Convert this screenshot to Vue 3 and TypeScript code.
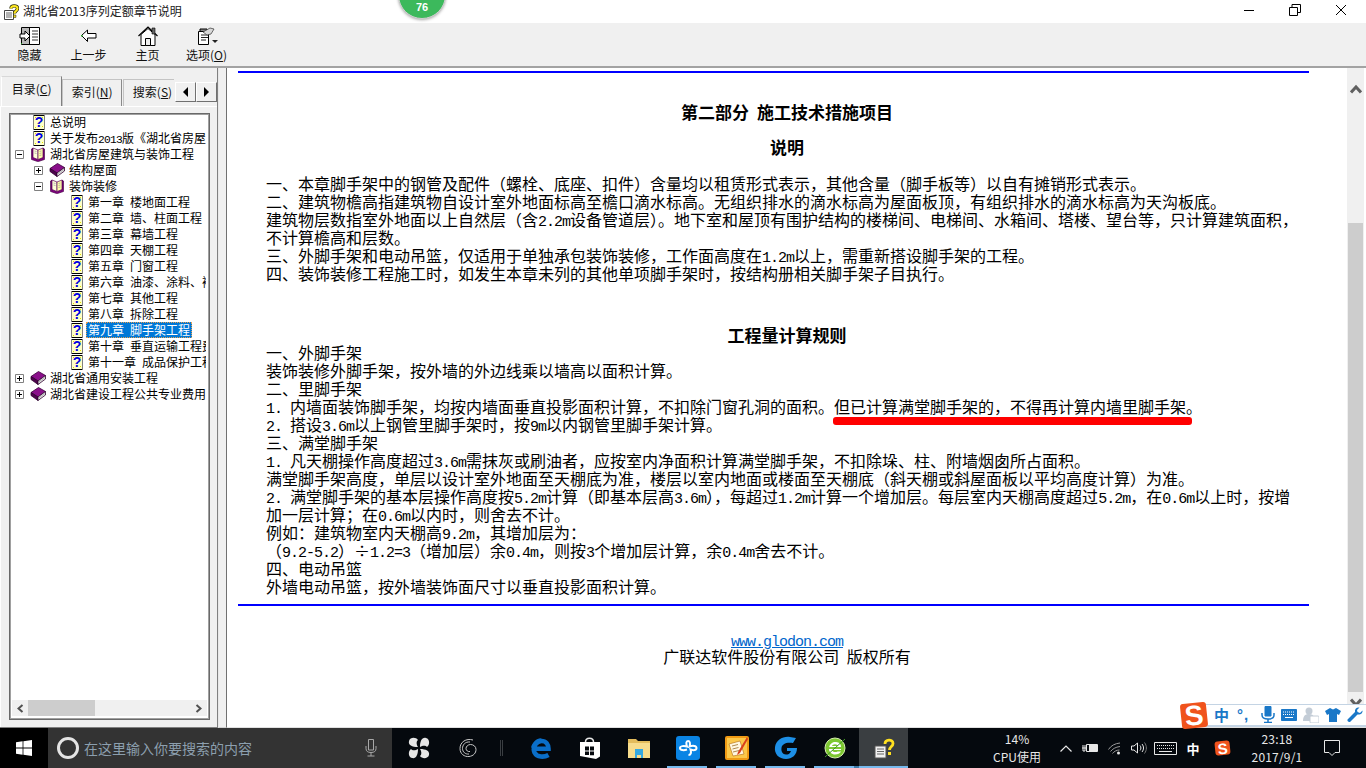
<script setup lang="ts">
type Seg = { t: string; lat: boolean }
type Row = { label: string; level: number; icon: 'help' | 'open' | 'closed'; exp?: '+' | '-'; selected?: boolean }

function seg(text: string): Seg[] {
  return (text.match(/[\x20-\x7e]+|[^\x20-\x7e]+/g) ?? []).map((t) => ({ t, lat: /^[\x20-\x7e]/.test(t) }))
}

const rows: Row[] = [
  { label: '总说明', level: 0, icon: 'help' },
  { label: '关于发布2013版《湖北省房屋建筑与装饰工程', level: 0, icon: 'help' },
  { label: '湖北省房屋建筑与装饰工程', level: 0, icon: 'open', exp: '-' },
  { label: '结构屋面', level: 1, icon: 'closed', exp: '+' },
  { label: '装饰装修', level: 1, icon: 'open', exp: '-' },
  { label: '第一章 楼地面工程', level: 2, icon: 'help' },
  { label: '第二章 墙、柱面工程', level: 2, icon: 'help' },
  { label: '第三章 幕墙工程', level: 2, icon: 'help' },
  { label: '第四章 天棚工程', level: 2, icon: 'help' },
  { label: '第五章 门窗工程', level: 2, icon: 'help' },
  { label: '第六章 油漆、涂料、裱糊工程', level: 2, icon: 'help' },
  { label: '第七章 其他工程', level: 2, icon: 'help' },
  { label: '第八章 拆除工程', level: 2, icon: 'help' },
  { label: '第九章 脚手架工程', level: 2, icon: 'help', selected: true },
  { label: '第十章 垂直运输工程费用', level: 2, icon: 'help' },
  { label: '第十一章 成品保护工程', level: 2, icon: 'help' },
  { label: '湖北省通用安装工程', level: 0, icon: 'closed', exp: '+' },
  { label: '湖北省建设工程公共专业费用', level: 0, icon: 'closed', exp: '+' },
]

const notes = [
  '一、本章脚手架中的钢管及配件（螺栓、底座、扣件）含量均以租赁形式表示，其他含量（脚手板等）以自有摊销形式表示。',
  '二、建筑物檐高指建筑物自设计室外地面标高至檐口滴水标高。无组织排水的滴水标高为屋面板顶，有组织排水的滴水标高为天沟板底。',
  '建筑物层数指室外地面以上自然层（含2.2m设备管道层）。地下室和屋顶有围护结构的楼梯间、电梯间、水箱间、塔楼、望台等，只计算建筑面积，',
  '不计算檐高和层数。',
  '三、外脚手架和电动吊篮，仅适用于单独承包装饰装修，工作面高度在1.2m以上，需重新搭设脚手架的工程。',
  '四、装饰装修工程施工时，如发生本章未列的其他单项脚手架时，按结构册相关脚手架子目执行。',
]
const rulesA = ['一、外脚手架', '装饰装修外脚手架，按外墙的外边线乘以墙高以面积计算。', '二、里脚手架']
const markedBefore = '1. 内墙面装饰脚手架，均按内墙面垂直投影面积计算，不扣除门窗孔洞的面积。'
const marked = '但已计算满堂脚手架的，不得再计算内墙里脚手架。'
const rulesB = [
  '2. 搭设3.6m以上钢管里脚手架时，按9m以内钢管里脚手架计算。',
  '三、满堂脚手架',
  '1. 凡天棚操作高度超过3.6m需抹灰或刷油者，应按室内净面积计算满堂脚手架，不扣除垛、柱、附墙烟囱所占面积。',
  '满堂脚手架高度，单层以设计室外地面至天棚底为准，楼层以室内地面或楼面至天棚底（斜天棚或斜屋面板以平均高度计算）为准。',
  '2. 满堂脚手架的基本层操作高度按5.2m计算（即基本层高3.6m），每超过1.2m计算一个增加层。每层室内天棚高度超过5.2m，在0.6m以上时，按增',
  '加一层计算；在0.6m以内时，则舍去不计。',
  '例如：建筑物室内天棚高9.2m，其增加层为：',
  '（9.2-5.2）÷1.2=3（增加层）余0.4m，则按3个增加层计算，余0.4m舍去不计。',
  '四、电动吊篮',
  '外墙电动吊篮，按外墙装饰面尺寸以垂直投影面积计算。',
]
</script>

<template>
  <div class="screen">
    <svg class="defs" width="0" height="0">
      <symbol id="i-help" viewBox="0 0 16 16">
        <path d="M3.5 1.5h11v14h-11z" fill="#ffffc8" stroke="#000" />
        <path d="M3 1h1v15H3zM14 1h1v15h-1z" fill="#808080" />
        <path d="M5 3h1v1H5zM7 9h1v1H7zM12 3h1v1h-1zM12 12h1v1h-1zM5 13h1v1H5z" fill="#e0e000" />
        <text x="9" y="13" text-anchor="middle" class="qmark">?</text>
      </symbol>
      <symbol id="i-closed" viewBox="0 0 16 16">
        <path d="M1 6.5 8.5 1.5 15.5 5.5 8 11z" fill="#8a0f8a" stroke="#3c003c" stroke-width=".8" />
        <path d="M1 6.5v3L8 14.5V11z" fill="#4e024e" stroke="#2d002d" stroke-width=".8" />
        <path d="M8 11v3.5l7.5-5.5V5.500z" fill="#e6e6e6" stroke="#2d002d" stroke-width=".8" />
        <path d="M8 12.500 15 7.500" stroke="#a0a0a0" stroke-width=".7" />
      </symbol>
      <symbol id="i-open" viewBox="0 0 16 16">
        <path d="M1.500 3v10.500L7.500 15.500h1l6-2V3L13 2v9.500l-4.500 2H7.500L3 11.500V2z" fill="#800080" stroke="#3c003c" stroke-width=".6" />
        <path d="M3 2 8 4v9.500L3 11.500z" fill="#ffffd8" stroke="#5a005a" stroke-width=".7" />
        <path d="M13 2 8 4v9.500l5-2z" fill="#ffffa8" stroke="#5a005a" stroke-width=".7" />
        <path d="M9.500 5.500 11.500 5M9.500 7.500l2-.5M9.500 9.500l2-.5M4.500 5l2 .5M4.500 7l2 .5" stroke="#9a9a9a" stroke-width=".7" />
      </symbol>
    </svg>

    <header class="titlebar">
      <svg class="title-icon" width="17" height="19" viewBox="0 0 17 19">
        <path d="M2.500 8.500h9v9h-9z" fill="#fff" stroke="#444" />
        <path d="M4 11h6M4 13h6M4 15h6" stroke="#666" />
        <path d="M9 6.500C9 3 15.500 3 15.500 6.500 15.500 9 12.500 9 12.500 11.500" fill="none" stroke="#2b2b00" stroke-width="3.400" />
        <path d="M9 6.500C9 3 15.500 3 15.500 6.500 15.500 9 12.500 9 12.500 11.500" fill="none" stroke="#ffe820" stroke-width="2" />
        <path d="M11.500 13h2.400v2.400h-2.400z" fill="#ffe820" stroke="#2b2b00" stroke-width=".6" />
      </svg>
      <span class="title-text">湖北省2013序列定额章节说明</span>
      <div class="win-buttons">
        <button class="win-btn"><svg width="12" height="12"><path d="M1 6.500h10" stroke="#000" /></svg></button>
        <button class="win-btn"><svg width="12" height="12"><path d="M.5 3.500h8v8h-8zM3 3.500V.5h8.500v8H8.500" fill="none" stroke="#000" /></svg></button>
        <button class="win-btn"><svg width="12" height="12"><path d="M1 1 11 11M11 1 1 11" stroke="#000" /></svg></button>
      </div>
    </header>

    <nav class="toolbar">
      <div class="tool">
        <svg width="22" height="20" viewBox="0 0 22 20">
          <path d="M2.500 1.500h18v17h-18z" fill="#fff" stroke="#000" />
          <path d="M3 2h7v16H3z" fill="#b8b8b8" />
          <path d="M10.500 1.500v17" stroke="#000" />
          <path d="M13 5h6M13 8h6M13 11h6M13 14h6" stroke="#333" />
          <path d="M1 8h5V5l5 5-5 5v-3H1z" fill="#fff" stroke="#000" />
          <path d="M2 17h1v1H2z" fill="#1aa01a" />
        </svg>
        <span>隐藏</span>
      </div>
      <div class="tool">
        <svg width="22" height="20" viewBox="0 0 22 20">
          <path d="M3.500 9.500 9.500 4v3.500h8.500v4.500H9.500v3.500z" fill="#fff" stroke="#000" />
          <path d="M3 9h1.500v1.500H3z" fill="#18a018" />
        </svg>
        <span>上一步</span>
      </div>
      <div class="tool">
        <svg width="22" height="20" viewBox="0 0 22 20">
          <path d="M1.500 10 11 1l9.500 9" fill="none" stroke="#000" stroke-width="1.200" />
          <path d="M4 8.500v11h14v-11L11 2.500z" fill="#fff" stroke="#000" />
          <path d="M15 2h3v6h-3z" fill="#666" stroke="#000" stroke-width=".6" />
          <path d="M8.500 19.500v-7h5v7z" fill="#ededed" stroke="#000" />
        </svg>
        <span>主页</span>
      </div>
      <div class="tool">
        <svg width="22" height="20" viewBox="0 0 22 20">
          <path d="M2.500 5.500h10v13h-10z" fill="#fff" stroke="#000" />
          <path d="M4 5V3h7v2" fill="#888" stroke="#000" />
          <path d="M5 9h7M5 11.500h7M5 14h5" stroke="#222" />
          <path d="M7 6 14 2l4 1-3 5-4 1z" fill="#d8d8d8" stroke="#333" stroke-width=".7" />
          <path d="M16 14h6l-3 3z" fill="#222" />
        </svg>
        <span>选项(<u>O</u>)</span>
      </div>
    </nav>

    <main class="main">
      <aside class="side">
        <div class="tabs">
          <div class="tab active">目录(<u>C</u>)</div>
          <div class="tab">索引(<u>N</u>)</div>
          <div class="tab clip">搜索(<u>S</u>)</div>
          <div class="tab-arrow"><svg width="7" height="10"><path d="M6 0v10L1 5z" /></svg></div>
          <div class="tab-arrow"><svg width="7" height="10"><path d="M1 0v10l5-5z" /></svg></div>
        </div>
        <div class="panel">
          <div class="tree">
            <div class="rows">
              <div v-for="r in rows" :key="r.label" class="row" :style="{ paddingLeft: 3 + r.level * 19 + 'px' }">
                <span class="exp" :class="{ hidden: !r.exp }">
                  <svg v-if="r.exp" width="9" height="9">
                    <path d="M.5.5h8v8h-8z" fill="#fff" stroke="#808080" />
                    <path d="M2 4.500h5" stroke="#000" />
                    <path v-if="r.exp === '+'" d="M4.500 2v5" stroke="#000" />
                  </svg>
                </span>
                <svg class="node-icon" width="16" height="16"><use :href="'#i-' + r.icon" /></svg>
                <span class="label" :class="{ sel: r.selected }"><span v-for="(s, i) in seg(r.label)" :key="i" :class="{ lat: s.lat }">{{ s.t }}</span></span>
              </div>
            </div>
            <div class="hbar">
              <svg class="hb-l" width="7" height="9"><path d="M5.500 1 1.500 4.500 5.500 8" fill="none" stroke="#505050" stroke-width="2" /></svg>
              <div class="hb-thumb"></div>
              <svg class="hb-r" width="7" height="9"><path d="M1.500 1 5.500 4.500 1.500 8" fill="none" stroke="#505050" stroke-width="2" /></svg>
            </div>
          </div>
        </div>
      </aside>

      <div class="splitter"></div>

      <section class="doc">
        <div class="page">
          <hr class="rule top" />
          <h1 class="h first">第二部分 施工技术措施项目</h1>
          <h2 class="h second">说明</h2>
          <div class="block notes">
            <div v-for="l in notes" :key="l" class="line"><span v-for="(s, i) in seg(l)" :key="i" :class="{ lat: s.lat }">{{ s.t }}</span></div>
          </div>
          <h2 class="h third">工程量计算规则</h2>
          <div class="block rules">
            <div v-for="l in rulesA" :key="l" class="line"><span v-for="(s, i) in seg(l)" :key="i" :class="{ lat: s.lat }">{{ s.t }}</span></div>
            <div class="line"><span v-for="(s, i) in seg(markedBefore)" :key="i" :class="{ lat: s.lat }">{{ s.t }}</span><span class="marked">{{ marked }}</span></div>
            <div v-for="l in rulesB" :key="l" class="line"><span v-for="(s, i) in seg(l)" :key="i" :class="{ lat: s.lat }">{{ s.t }}</span></div>
          </div>
          <hr class="rule bottom" />
          <div class="foot-link"><a>www.glodon.com</a></div>
          <div class="foot-copy">广联达软件股份有限公司 版权所有</div>
        </div>
        <div class="vbar">
          <svg class="vb-up" width="12" height="10"><path d="M1 8.500 6 3l5 5.500" fill="none" stroke="#606060" stroke-width="3" /></svg>
          <div class="vb-thumb"></div>
          <svg class="vb-down" width="12" height="10"><path d="M1 1.500 6 7l5-5.500" fill="none" stroke="#606060" stroke-width="3" /></svg>
        </div>
      </section>
    </main>

    <footer class="taskbar">
      <div class="start">
        <svg width="16" height="16" viewBox="0 0 16 16"><path d="M0 2.300 6.600 1.300V7.600H0zM7.400 1.200 16 0V7.600H7.400zM0 8.400H6.600V14.700L0 13.700zM7.400 8.400H16V16L7.400 14.800z" fill="#fff" /></svg>
      </div>
      <div class="search">
        <svg width="22" height="22"><circle cx="11" cy="11" r="9.500" fill="none" stroke="#e4e4e4" stroke-width="3" /></svg>
        <span class="search-text">在这里输入你要搜索的内容</span>
        <svg class="mic" width="12" height="18" viewBox="0 0 12 18"><path d="M3.500.5h5v10.500h-5z" fill="none" stroke="#a8a8a8" /><path d="M1 7v2.500Q1 13.500 6 13.500T11 9.500V7M6 13.500V17M2.500 17h7" fill="none" stroke="#a8a8a8" /></svg>
      </div>
      <div class="slot">
        <svg width="22" height="22" viewBox="0 0 22 22" fill="#e6e6e6"><path d="M10 10C4 10 0 8 1 4 2 0 8 0 10 3 8.500 4 8 7 10 10zM12 10C12 4 14 0 18 1 22 2 22 8 19 10 18 8.500 15 8 12 10zM12 12C18 12 22 14 21 18 20 22 14 22 12 19 13.500 18 14 15 12 12zM10 12C10 18 8 22 4 21 0 20 0 14 3 12 4 13.500 7 14 10 12z" /></svg>
      </div>
      <div class="slot">
        <svg width="20" height="20" viewBox="0 0 20 20" fill="none" stroke="#c8c8c8"><path d="M15 2C8 0 2 4 2 10.500 2 16 6.500 19 11 18.500 15.500 18 18 15 18 11.500 18 8.500 15.500 6.500 12.500 6.500 10 6.500 8 8.500 8 10.500 8 12.500 10 14 12 13.500" /><path d="M12 4C7 3.500 4.500 7 4.500 10.500 4.500 14 7.500 16.500 11 16" /></svg>
      </div>
      <div class="slot divider"><i></i><i></i></div>
      <div class="slot">
        <svg width="22" height="22" viewBox="0 0 22 22" fill="none"><path d="M18.500 18C14 20.500 7 20.500 4.500 15.500 2 9.500 7 4 11.500 4 16 4 18.500 7.500 18.500 11.800H4.500" stroke="#0a6ec9" stroke-width="4.600" /><path d="M1 11C2 5 7 1 12 1 9 2.500 6.500 4 5 8z" fill="#0a6ec9" /></svg>
      </div>
      <div class="slot">
        <svg width="22" height="24" viewBox="0 0 22 24"><path d="M6.500 6C6.500 1 14.500 1 14.500 6" fill="none" stroke="#e8e8e8" stroke-width="1.500" /><path d="M1 6h20v14.500L17 23 1 20z" fill="#fff" /><path d="M6 10.500h4v4H6zM11 10.500h4v4h-4zM6 15.500h4v3.500H6zM11 15.500h4v3.800h-4z" fill="#05090e" /></svg>
      </div>
      <div class="slot">
        <svg width="22" height="20" viewBox="0 0 22 20"><path d="M0 1h8l2 2h12v17H0z" fill="#e3bc5c" /><path d="M0 5h22v15H0z" fill="#f7dc8c" /><path d="M7 13h8v-2H7zM7 13h8v7H7z" fill="#35a8e0" /><path d="M9 17h4v3H9z" fill="#f7dc8c" /></svg>
      </div>
      <div class="slot run">
        <svg width="24" height="24" viewBox="0 0 24 24"><rect width="24" height="24" rx="3" fill="#0a84e4" /><path d="M12 5c2 0 2.500 2.500 1.500 5.500 3-1 7-1 7 1.500s-3 2.500-6 1.500c1 3 .5 5.500-2 5.500M12 5c-2 0-2 2.500-1 5.500-3-1-7-.5-7 1.500 0 2.500 4 2.500 7 1.500" fill="none" stroke="#fff" stroke-width="2" /></svg>
      </div>
      <div class="slot run">
        <svg width="24" height="24" viewBox="0 0 24 24"><rect width="24" height="24" rx="2" fill="#f09a14" /><rect x="2" y="2" width="20" height="20" fill="#fbc84a" /><path d="M4 8 15 5l4 13-11 2z" fill="#fff7e0" stroke="#b06a10" stroke-width=".6" /><path d="M7 10l6-1.500M7.500 13l6-1.500M8 16l6-1.500" stroke="#b08a50" /><path d="M22 1 13 16l-1 3 3-2L23 3z" fill="#d8401c" /></svg>
      </div>
      <div class="slot run">
        <svg width="24" height="24" viewBox="0 0 24 24"><path d="M22 2 16 1C9 0 2 4 1 11 0 18 5 23 12 23 18 23 23 19 23 12 H13V15H17C16 18 14 18.500 12 18.500 8.500 18.500 7 15.500 7.500 12 8 8 12 6 19 7Z" fill="#1d8fe6" /></svg>
      </div>
      <div class="slot run multi">
        <svg width="24" height="24" viewBox="0 0 24 24"><circle cx="12" cy="12" r="10" fill="#7ec832" /><circle cx="12" cy="12" r="10" fill="none" stroke="#d8f0b0" /><path d="M6 11h12C18 7 15 6 12 6 9 6 6.500 8.500 6 12 5.500 16 9 18.500 12 18.500c3 0 5-1 6-3h-3.500c-1.500 1-4.500 1-5.500-1.500H18v-1H6z" fill="#fff" /><path d="M9 10c.3-1 1.500-1.800 3-1.800s2.700.8 3 1.800z" fill="#7ec832" /><path d="M2 21 22 3" stroke="#3d9620" stroke-width="1" /></svg>
      </div>
      <div class="slot run active">
        <svg width="22" height="22" viewBox="0 0 22 22">
          <path d="M2 9h11v12H2z" fill="#f0f0f0" stroke="#555" />
          <path d="M4 12h7M4 14.500h7M4 17h7" stroke="#666" />
          <path d="M12 7C12 2 20 2 20 6.500 20 9.500 16.500 9.500 16.500 13" fill="none" stroke="#ffe020" stroke-width="2.800" />
          <path d="M15 15h3v3h-3z" fill="#ffe020" />
        </svg>
      </div>

      <div class="cpu"><span>14%</span><span>CPU使用</span></div>
      <div class="tray w22"><svg width="12" height="7"><path d="M.5 6.500 6 1l5.500 5.500" fill="none" stroke="#e8e8e8" stroke-width="1.200" /></svg></div>
      <div class="tray w25">
        <svg width="16" height="12" viewBox="0 0 16 12"><path d="M4.500 2.500h11v7h-11z" fill="none" stroke="#e8e8e8" /><path d="M7 3h8v6H7z" fill="#e8e8e8" /><path d="M0 6h4M1 3v6h2V3" stroke="#e8e8e8" fill="none" /></svg>
      </div>
      <div class="tray w25">
        <svg width="13" height="13" viewBox="0 0 13 13" fill="none" stroke="#9a9a9a"><path d="M.5 7.500C3 3.500 7 1.500 12 1M2.500 9.500C4.500 7 7.500 5 12 4.500M4.500 11.500C6 9.500 8.500 8 11.500 8" /><circle cx="10.500" cy="11" r="1.500" fill="#e8e8e8" stroke="none" /></svg>
      </div>
      <div class="tray w23">
        <svg width="16" height="12" viewBox="0 0 16 12" fill="none" stroke="#e8e8e8"><path d="M.5 4v4h2.500L6.500 11V1L3 4z" /><path d="M9 3.500C10.200 5 10.200 7 9 8.500M11 2C13 4.500 13 7.500 11 10" /><path d="M13.500.5C16 4 16 8 13.500 11.500" stroke="#777" /></svg>
      </div>
      <div class="tray w30">
        <svg width="23" height="13" viewBox="0 0 23 13" fill="none"><path d="M.5.5h22v12H.5z" stroke="#e8e8e8" /><path d="M3 3.500h17M3 6.500h17" stroke="#e8e8e8" stroke-dasharray="1 1" /><path d="M5 9.500h13" stroke="#e8e8e8" /></svg>
      </div>
      <div class="tray w26 ime-zh">中</div>
      <div class="tray w32"><span class="sogou small">S</span></div>
      <div class="clock"><span>23:18</span><span>2017/9/1</span></div>
      <div class="tray w32">
        <svg width="16" height="17" viewBox="0 0 16 17"><path d="M.5.500h15v12H11L8 15.500 5 12.500H.5z" fill="none" stroke="#e8e8e8" /></svg>
      </div>
    </footer>

    <div class="badge">76</div>

    <div class="ime">
      <span class="sogou big">S</span>
      <div class="ime-bar">
        <span class="ime-cn">中</span>
        <span class="ime-punct">°,</span>
        <svg width="14" height="17" viewBox="0 0 14 17"><path d="M4 .5h6v9.500H4z" fill="#1a78c8" stroke="#1a78c8" stroke-linejoin="round" /><path d="M1 7v2Q1 13 7 13t6-4V7M7 13v3M3 16.500h8" fill="none" stroke="#1a78c8" stroke-width="1.500" /></svg>
        <svg width="16" height="12" viewBox="0 0 16 12"><path d="M.5.500h15v11H.5z" fill="#1a78c8" stroke="#1a78c8" /><path d="M2 3h12M2 5.500h12" stroke="#fff" stroke-dasharray="1 1" /><path d="M4 8.500h8" stroke="#fff" /></svg>
        <svg width="16" height="16" viewBox="0 0 16 16"><circle cx="6" cy="4" r="3.500" fill="#c3ccd6" /><path d="M0 14c0-6 3-7 6-7s4 1 5 3v4z" fill="#c3ccd6" /><rect x="7" y="9" width="9" height="7" rx="1" fill="#fff" stroke="#c3ccd6" /></svg>
        <svg width="16" height="14" viewBox="0 0 16 14"><path d="M5 0 8 1.500 11 0l5 3-2 4-2-1v8H4V6L2 7 0 3z" fill="#1a78c8" /></svg>
        <svg width="16" height="16" viewBox="0 0 16 16"><path d="M15.500 3.500 13 6 10.500 5 10 3 12.500.5C9.500 0 7.500 2 8 5L.5 12.500C0 14 1.500 15.500 3 15L10.500 7.500C13.500 8 16 6 15.500 3.500z" fill="#1a78c8" /></svg>
      </div>
    </div>
  </div>
</template>

<style>
html, body { margin: 0; padding: 0; background: #fff; overflow: hidden; }
</style>

<style scoped>
.screen {
  position: relative;
  width: 1366px;
  height: 768px;
  overflow: hidden;
  display: flex;
  flex-direction: column;
  font-family: "Noto Sans CJK SC", "Liberation Sans", sans-serif;
  font-size: 12px;
  color: #000;
  background: #fff;
}
.defs { position: absolute; }
.qmark { font: bold 14px "Liberation Sans", sans-serif; fill: #0000e0; }

.titlebar { height: 23px; flex: none; display: flex; align-items: center; background: #fff; }
.title-icon { margin: 0 4px 0 2px; }
.title-text { font-size: 12px; color: #222; position: relative; top: -1px; }
.win-buttons { margin-left: auto; margin-right: 2px; display: flex; }
.win-btn { width: 46px; height: 23px; padding: 0 0 3px; border: 0; background: none; display: flex; align-items: center; justify-content: center; }

.toolbar { height: 43px; flex: none; display: flex; background: #f0f0f0; border-bottom: 2px solid #a3a3a3; }
.tool { width: 59px; display: flex; flex-direction: column; align-items: center; padding-top: 3px; box-sizing: border-box; }
.tool span { line-height: 18px; color: #111; }
.tool u { text-underline-offset: 1px; }

.main { flex: 1; min-height: 0; display: flex; }

.side { width: 218px; flex: none; background: #f0f0f0; display: flex; flex-direction: column; border-right: 1px solid #808080; border-bottom: 1px solid #808080; box-sizing: border-box; }
.tabs { height: 38px; flex: none; display: flex; align-items: flex-end; padding-left: 1px; }
.tab { height: 27px; box-sizing: border-box; width: 60px; margin-right: 1px; padding-bottom: 4px; display: flex; align-items: center; justify-content: center; background: #f0f0f0; border: 1px solid #c4c4c4; border-right-color: #8a8a8a; border-bottom: 0; color: #111; }
.tab.active { width: 62px; height: 30px; margin-right: 0; border-color: #d8d8d8 #808080 #f0f0f0 #ffffff; background: #f0f0f0; padding-bottom: 6px; }
.tab.clip { width: 52px; overflow: hidden; justify-content: flex-start; padding-left: 9px; white-space: nowrap; border-right: 0; }
.tab-arrow { width: 21px; height: 20px; margin-bottom: 4px; display: flex; align-items: center; justify-content: center; background: #f0f0f0; border: 1px solid #fff; border-right-color: #707070; border-bottom-color: #707070; box-sizing: border-box; }
.tab-arrow path { fill: #000; }
.panel { flex: 1; min-height: 0; padding: 6px 7px 7px 8px; border-top: 1px solid #fff; border-left: 1px solid #fff; box-sizing: border-box; }
.tree { height: 100%; box-sizing: border-box; background: #fff; border: 1px solid #696969; box-shadow: inset 0 0 0 1px #a0a0a0; padding: 0 2px 2px; display: flex; flex-direction: column; }
.rows { flex: 1; min-height: 0; overflow: hidden; margin-right: 1px; }
.row { height: 16px; display: flex; align-items: center; white-space: pre; }
.exp { width: 9px; height: 9px; flex: none; display: flex; margin-right: 6px; }
.node-icon { flex: none; margin-right: 4px; }
.label { line-height: 16px; height: 16px; flex: none; color: #000; }
.label.sel { margin-left: -2px; padding: 0 2px; background: #0078d7; color: #fff; outline: 1px dotted #e8a050; outline-offset: -1px; }
.lat { font-family: "Liberation Mono", monospace; font-size: 0.9375em; letter-spacing: -0.06667em; }

.hbar { height: 16px; flex: none; background: #f0f0f0; display: flex; align-items: center; margin-bottom: 1px; }
.hb-l { margin-left: 5px; }
.hb-thumb { width: 67px; height: 100%; margin-left: 4px; background: #cdcdcd; }
.hb-r { margin-left: auto; margin-right: 5px; }

.splitter { width: 9px; flex: none; background: #f0f0f0; box-sizing: border-box; border-left: 1px solid #e8e8e8; border-right: 1px solid #707070; border-bottom: 1px solid #d0d0d0; }

.doc { flex: 1; min-width: 0; display: flex; border-bottom: 1px solid #e0e0e0; box-sizing: border-box; position: relative; }
.page { width: 1120px; flex: none; box-sizing: border-box; padding-top: 3px; }
.rule { height: 2px; margin: 0 0 0 11px; width: 1071px; border: 0; background: #0000ff; }
.rule.bottom { margin-top: 9px; }
.h { margin: 0; font-size: 17px; line-height: 18px; height: 18px; font-weight: 700; text-align: center; word-spacing: 4px; }
.h.first { margin-top: 30px; }
.h.second { margin-top: 17px; }
.h.third { margin-top: 44px; margin-bottom: -1px; }
.block { padding-left: 39px; }
.notes { margin-top: 18px; }
.line { height: 18px; line-height: 18px; font-size: 16px; white-space: pre; }
.marked { position: relative; display: inline-block; height: 18px; line-height: 18px; vertical-align: top; }
.marked::after { content: ""; position: absolute; left: -1px; right: 10px; top: 20px; height: 8px; border-radius: 3px; background: #ff0000; }
.foot-link { margin-top: 30px; height: 11px; line-height: 14px; text-align: center; font-family: "Liberation Mono", monospace; font-size: 15px; letter-spacing: -1px; }
.foot-link a { color: #0066cc; text-decoration: underline; }
.foot-copy { height: 18px; line-height: 18px; font-size: 16px; text-align: center; word-spacing: 4px; }

.vbar { width: 17px; flex: none; background: #f0f0f0; display: flex; flex-direction: column; align-items: center; }
.vb-up { margin-top: 16px; }
.vb-thumb { width: 15px; height: 469px; margin-top: 129px; background: #cdcdcd; }
.vb-down { margin-top: 6px; }

.taskbar { height: 40px; flex: none; display: flex; background: #05090e; color: #e8e8e8; }
.start { width: 48px; background: #000; display: flex; align-items: center; justify-content: center; }
.search { width: 344px; margin-right: 2px; background: #333333; display: flex; align-items: center; padding: 0 15px 0 9px; box-sizing: border-box; }
.search-text { font-size: 14px; margin-left: 5px; color: #8c9fae; }
.mic { margin-left: auto; margin-right: 0; }
.slot { width: 49px; height: 40px; position: relative; display: flex; align-items: center; justify-content: center; padding-bottom: 1px; box-sizing: border-box; }
.divider { width: 24px; gap: 1px; justify-content: flex-start; padding-left: 8px; }
.divider i { width: 1px; height: 16px; background: #3a3e42; }
.run::after { content: ""; position: absolute; left: 4px; right: 5px; bottom: 0; height: 2px; background: #76b9ed; }
.multi::before { content: ""; position: absolute; left: 44px; right: 0; bottom: 0; height: 2px; background: #3f7ba8; }
.active { background: #3a3e41; }
.active::after { left: 0; right: 0; }
.cpu { width: 54px; margin-left: 82px; display: flex; flex-direction: column; align-items: center; justify-content: center; line-height: 18px; font-size: 12px; white-space: nowrap; }
.tray { display: flex; align-items: center; justify-content: center; flex: none; }
.w22 { width: 22px; margin-left: 11px; }
.w23 { width: 23px; }
.w25 { width: 25px; }
.w26 { width: 26px; }
.w30 { width: 30px; }
.w32 { width: 32px; }
.ime-zh { font-size: 13px; font-weight: 700; color: #fff; }
.clock { width: 78px; flex: none; display: flex; flex-direction: column; align-items: center; justify-content: center; line-height: 18px; font-size: 12px; letter-spacing: .2px; }

.sogou { display: flex; align-items: center; justify-content: center; background: #f0531c; color: #fff; font-family: "Liberation Sans", sans-serif; font-weight: 700; transform: rotate(-6deg); }
.sogou.small { width: 15px; height: 14px; border-radius: 3px; font-size: 15px; }
.sogou.big { width: 26px; height: 25px; border-radius: 3px; font-size: 28px; flex: none; position: relative; z-index: 1; margin-right: -5px; }

.badge {
  position: absolute;
  left: 398px;
  top: -29px;
  width: 48px;
  height: 48px;
  box-sizing: border-box;
  border-radius: 50%;
  background: #3cb95c;
  border: 1px solid #d0d0d0;
  box-shadow: 0 1px 3px rgba(0, 0, 0, .35);
  color: #fff;
  font: 700 11px/12px "Liberation Sans", sans-serif;
  text-align: center;
  padding-top: 29px;
}

.ime { position: absolute; right: 0; top: 702px; display: flex; align-items: center; width: 185px; height: 26px; }
.ime-bar { flex: 1; height: 23px; box-sizing: border-box; background: #fff; border: 1px solid #c4d4e4; border-right: 0; border-bottom-width: 2px; display: flex; align-items: center; gap: 6px; padding-left: 11px; color: #1a78c8; }
.ime-cn { font-size: 15px; font-weight: 700; }
.ime-punct { font-size: 15px; font-weight: 700; width: 18px; margin-left: 2px; font-family: "Liberation Sans", sans-serif; letter-spacing: 1px; }
</style>
